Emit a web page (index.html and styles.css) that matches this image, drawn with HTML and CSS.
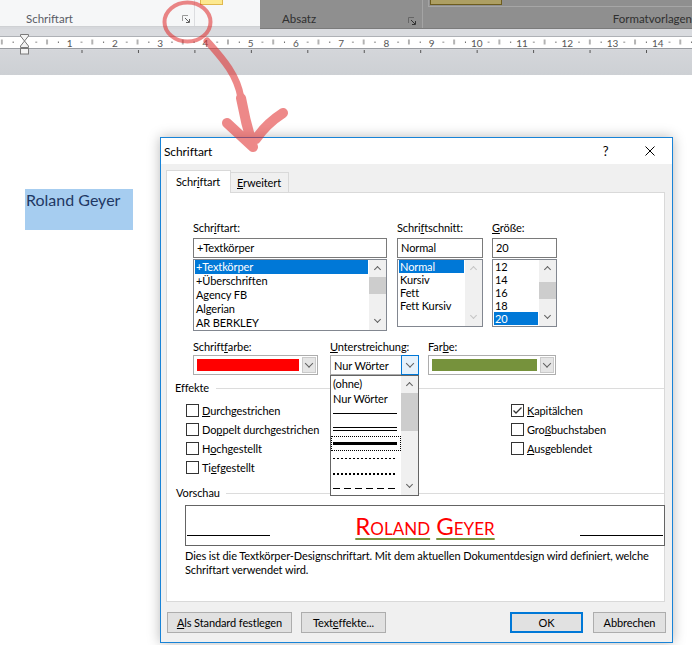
FILE: index.html
```html
<!DOCTYPE html>
<html lang="de">
<head>
<meta charset="utf-8">
<title>Schriftart</title>
<link rel="stylesheet" href="styles.css">
</head>
<body>
<div class="ribbon">
  <div class="rb-left">
    <div class="grp-font">
      <span class="grp-lbl">Schriftart</span>
      <svg class="launch" width="8" height="8" viewBox="0 0 8 8"><path d="M0.5 6V0.5H6" fill="none" stroke="#9a9a9a"/><path d="M3 3L7 7M7.5 4V7.5H4" fill="none" stroke="#606060"/></svg>
    </div>
    <div class="grp-par"><span class="hl-btn"></span></div>
  </div>
  <div class="rb-right">
    <div class="grp-abs">
      <span class="grp-lbl dark">Absatz</span>
      <svg class="launch" width="8" height="8" viewBox="0 0 8 8"><path d="M0.5 6V0.5H6" fill="none" stroke="#666"/><path d="M3 3L7 7M7.5 4V7.5H4" fill="none" stroke="#333"/></svg>
    </div>
    <div class="grp-styles">
      <div class="gallery"><span class="gal-sel"></span></div>
      <span class="grp-lbl dark">Formatvorlagen</span>
    </div>
  </div>
</div>
<div class="ruler-area">
  <svg width="692" height="46" viewBox="0 0 692 46">
    <defs>
      <pattern id="tk" x="24.47" y="0" width="45.23" height="46" patternUnits="userSpaceOnUse">
        <rect x="11.3" y="12.5" width="1" height="1.5" fill="#666"/>
        <rect x="22.1" y="10.5" width="1" height="5" fill="#666"/>
        <rect x="33.4" y="12.5" width="1" height="1.5" fill="#666"/>
      </pattern>
      <pattern id="tb" x="81.5" y="0" width="56.45" height="46" patternUnits="userSpaceOnUse">
        <rect x="0" y="21" width="1" height="3" fill="#555"/>
      </pattern>
    </defs>
    <rect x="0" y="7" width="692" height="12" fill="#fff"/>
    <rect x="0" y="7" width="692" height="1" fill="#aeb1b6"/>
    <rect x="0" y="19" width="692" height="1" fill="#9a9da2"/>
    <rect x="0" y="8" width="692" height="11" fill="url(#tk)"/>
    <rect x="0" y="20" width="692" height="6" fill="url(#tb)"/>
    <g class="rnum" text-anchor="middle">
      <text x="69.7" y="17.5">1</text><text x="114.9" y="17.5">2</text><text x="160.2" y="17.5">3</text><text x="205.4" y="17.5">4</text><text x="250.6" y="17.5">5</text><text x="295.9" y="17.5">6</text><text x="341.1" y="17.5">7</text><text x="386.3" y="17.5">8</text><text x="431.5" y="17.5">9</text><text x="476.8" y="17.5">10</text><text x="522" y="17.5">11</text><text x="567.2" y="17.5">12</text><text x="612.5" y="17.5">13</text><text x="657.7" y="17.5">14</text>
    </g>
    <g fill="#f3f3f3" stroke="#7b7b7b" stroke-width="1">
      <path d="M20.5 5.5H28.5V7L24.5 12L20.5 7Z"/>
      <path d="M24.5 12L28.5 17V18.5H20.5V17Z"/>
      <rect x="20.5" y="19.5" width="8" height="5.5"/>
    </g>
  </svg>
</div>
<div class="doc">
  <div class="sel-text">Roland Geyer</div>
</div>

<div class="dialog">
  <div class="titlebar">
    <span class="title">Schriftart</span>
    <span class="help">?</span>
    <svg class="close" width="10" height="10" viewBox="0 0 10 10"><path d="M0.5 0.5L9.5 9.5M9.5 0.5L0.5 9.5" stroke="#000" stroke-width="1"/></svg>
  </div>
  <div class="dbody">
    <div class="tabs">
      <div class="tab active">Schr<u>i</u>ftart</div>
      <div class="tab"><u>E</u>rweitert</div>
    </div>
    <div class="panel">
      <div class="row1">
        <div class="fld f-font">
          <div class="lbl">Schr<u>i</u>ftart:</div>
          <div class="inp">+Textkörper</div>
          <div class="list l-font">
            <div class="items">
              <div class="it sel">+Textkörper</div>
              <div class="it">+Überschriften</div>
              <div class="it">Agency FB</div>
              <div class="it">Algerian</div>
              <div class="it">AR BERKLEY</div>
            </div>
            <div class="sb"><div class="arr up"></div><div class="trk"><div class="thumb"></div></div><div class="arr dn"></div></div>
          </div>
        </div>
        <div class="fld f-style">
          <div class="lbl">Schri<u>f</u>tschnitt:</div>
          <div class="inp">Normal</div>
          <div class="list l-sm">
            <div class="items">
              <div class="it sel">Normal</div>
              <div class="it">Kursiv</div>
              <div class="it">Fett</div>
              <div class="it">Fett Kursiv</div>
            </div>
            <div class="sb"><div class="arr up off"></div><div class="trk"></div><div class="arr dn off"></div></div>
          </div>
        </div>
        <div class="fld f-size">
          <div class="lbl"><u>G</u>röße:</div>
          <div class="inp">20</div>
          <div class="list l-sm">
            <div class="items">
              <div class="it">12</div>
              <div class="it">14</div>
              <div class="it">16</div>
              <div class="it">18</div>
              <div class="it sel">20</div>
            </div>
            <div class="sb"><div class="arr up"></div><div class="trk"><div class="thumb t-size"></div></div><div class="arr dn"></div></div>
          </div>
        </div>
      </div>
      <div class="row2">
        <div class="fld f-color">
          <div class="lbl2">Schrift<u>f</u>arbe:</div>
          <div class="combo"><span class="sw sw-red"></span><span class="dbtn"></span></div>
        </div>
        <div class="fld f-ul">
          <div class="lbl2"><u>U</u>nterstreichung:</div>
          <div class="combo combo-ul"><span class="ctext">Nur Wörter</span><span class="dbtn focus"></span></div>
        </div>
        <div class="fld f-ucol">
          <div class="lbl2">Far<u>b</u>e:</div>
          <div class="combo"><span class="sw sw-green"></span><span class="dbtn"></span></div>
        </div>
      </div>
      <div class="sec-h">Effekte</div>
      <div class="fx">
        <div class="cb"><span class="box"></span><span><u>D</u>urchgestrichen</span></div>
        <div class="cb"><span class="box"></span><span>Do<u>p</u>pelt durchgestrichen</span></div>
        <div class="cb"><span class="box"></span><span>H<u>o</u>chgestellt</span></div>
        <div class="cb"><span class="box"></span><span>Ti<u>e</u>fgestellt</span></div>
        <div class="cb"><span class="box"><svg width="11" height="11" viewBox="0 0 11 11"><path d="M1.5 5.5L4 8L9.5 2.5" fill="none" stroke="#333" stroke-width="1.3"/></svg></span><span><u>K</u>apitälchen</span></div>
        <div class="cb"><span class="box"></span><span>Gro<u>ß</u>buchstaben</span></div>
        <div class="cb"><span class="box"></span><span><u>A</u>usgeblendet</span></div>
      </div>
      <div class="sec-h sec-pv">Vorschau</div>
      <div class="pv-box">
        <span class="pv-rule"></span>
        <span class="pv-text"><span class="w">Roland</span> <span class="w">Geyer</span></span>
        <span class="pv-rule"></span>
      </div>
      <p class="desc">Dies ist die Textkörper-Designschriftart. Mit dem aktuellen Dokumentdesign wird definiert, welche<br>Schriftart verwendet wird.</p>
    </div>
    <div class="btns">
      <div class="btn b-std"><span><u>A</u>ls Standard festlegen</span></div>
      <div class="btn b-fx"><span>Text<u>e</u>ffekte...</span></div>
      <div class="btn b-ok">OK</div>
      <div class="btn b-cancel">Abbrechen</div>
    </div>
  </div>
  <div class="ddl">
    <div class="dd-items">
      <div class="dd-it">(ohne)</div>
      <div class="dd-it">Nur Wörter</div>
      <div class="dd-it"><span class="ln ln-single"></span></div>
      <div class="dd-it"><span class="ln ln-double"></span></div>
      <div class="dd-it focus"><span class="ln ln-thick"></span></div>
      <div class="dd-it"><span class="ln ln-dot"></span></div>
      <div class="dd-it"><span class="ln ln-dotbold"></span></div>
      <div class="dd-it"><span class="ln ln-dash"></span></div>
    </div>
    <div class="sb"><div class="arr up"></div><div class="trk"><div class="thumb t-dd"></div></div><div class="arr dn"></div></div>
  </div>
</div>

<svg class="annot" width="692" height="645" viewBox="0 0 692 645">
  <g opacity="0.55" fill="none" stroke="#e02828" stroke-linecap="round" stroke-linejoin="round">
    <ellipse cx="187.5" cy="22" rx="23" ry="19.5" stroke-width="4"/>
    <path d="M207 41 C222 58 237 74 241 98" stroke-width="7"/>
    <path d="M241 98 C245 120 249 134 253 147 M227 123 L253 147 M283 113 Q266 124 256 139" stroke-width="10"/>
  </g>
</svg>
</body>
</html>
```
FILE: styles.css
```css
* { box-sizing: border-box; }

body {
  margin: 0;
  width: 692px;
  height: 645px;
  overflow: hidden;
  position: relative;
  background: #fff;
  font-family: Lato, "Liberation Sans", sans-serif;
  font-size: 11px;
  letter-spacing: -0.1px;
  color: #000;
}

/* ribbon */
.ribbon { display: flex; height: 29px; background: #d6d8dc; }
.rb-left { width: 260px; height: 27px; background: #f6f7f8; border-bottom: 1px solid #cfd1d4; display: flex; }
.grp-font {
  width: 195px; border-right: 1px solid #dcdde0;
  display: flex; align-items: flex-end; justify-content: space-between;
  padding: 0 4px 0 26px;
}
.grp-lbl { font-size: 11.5px; letter-spacing: 0; line-height: 14px; color: #5a5c66; white-space: nowrap; }
.grp-lbl.dark { color: #303030; }
.launch { display: block; margin-bottom: 3px; }
.grp-par { flex: 1; padding-left: 5px; }
.hl-btn { display: block; width: 23px; height: 5px; background: #fde98f; border: 1px solid #e0b84e; border-top: none; }
.rb-right { flex: 1; height: 29px; background: #8f8f8f; display: flex; border-bottom: 1px solid #7b7b7b; }
.grp-abs {
  width: 163px; border-right: 1px solid #a4a4a4;
  display: flex; align-items: flex-end; justify-content: space-between;
  padding: 0 6px 2px 22px;
}
.grp-abs .launch { margin-bottom: 1px; }
.grp-styles { flex: 1; display: flex; flex-direction: column; align-items: flex-end; padding-left: 5px; padding-bottom: 2px; }
.gallery { align-self: stretch; height: 7px; border-left: 1px solid #a3a3a3; border-bottom: 1px solid #a6a6a6; padding-left: 1px; }
.gal-sel { display: block; width: 72px; height: 5px; background: #ad9f63; border: 1px solid #6d5c1e; border-top: none; }
.grp-styles .grp-lbl { margin-top: auto; }

/* ruler */
.ruler-area { height: 46px; background: linear-gradient(#d9dbdf 0, #d9dbdf 20px, #d4d6da 21px, #cdd0d4 46px); }
.ruler-area svg { display: block; }
.rnum text { font-family: Lato, "Liberation Sans", sans-serif; font-size: 10px; fill: #555; }

/* document */
.doc { height: 570px; background: #fff; padding-top: 114px; padding-left: 25px; }
.sel-text {
  width: 108px; height: 41px; background: #a6cdf0; letter-spacing: 0;
  color: #1f3864; font-size: 16px; line-height: 20px; padding: 1px 0 0 1px;
}

/* dialog */
.dialog {
  position: absolute; left: 160px; top: 137px;
  width: 513px; height: 506px;
  border: 1px solid #1883d7; background: #f0f0f0;
  box-shadow: 0 0 12px rgba(0,0,0,0.28);
}
.titlebar { height: 26px; background: #fff; display: flex; align-items: center; padding-left: 3px; }
.title { font-size: 12px; letter-spacing: -0.1px; }
.help { margin-left: auto; width: 11px; text-align: center; font-size: 13px; }
.close { display: block; margin-left: 34px; margin-right: 17px; }
.dbody { padding: 6px 6px 0 5px; }
.tabs { display: flex; height: 22px; align-items: flex-end; }
.tab {
  height: 20px; width: 58px; border: 1px solid #d9d9d9; border-bottom: none; border-left: none;
  background: #f0f0f0; line-height: 19px; padding-left: 6px; white-space: nowrap;
}
.tab.active {
  height: 23px; width: 65px; border-left: 1px solid #d9d9d9; background: #fff;
  position: relative; z-index: 1; margin-bottom: -1px; line-height: 22px; padding-left: 9px;
}
.panel { width: 499px; height: 410px; border: 1px solid #d9d9d9; background: #fff; padding-top: 28px; }

.row1 { display: flex; margin-left: 26px; }
.f-font { width: 194px; }
.f-style { width: 86px; margin-left: 10px; }
.f-size { width: 65px; margin-left: 9px; }
.lbl { height: 14px; line-height: 14px; margin-bottom: 3px; white-space: nowrap; }
.inp { height: 20px; border: 1px solid #7a7a7a; background: #fff; padding-left: 3px; line-height: 18px; white-space: nowrap; }
.list { margin-top: 1px; border: 1px solid #828790; background: #fff; display: flex; }
.l-font { height: 72px; }
.l-sm { height: 68px; }
.items { flex: 1; padding: 0 1px; overflow: hidden; }
.it { height: 14px; line-height: 14px; padding-left: 1px; white-space: nowrap; }
.l-sm .it { height: 13px; line-height: 13px; }
.it.sel { background: #0078d7; color: #fff; }

.sb { width: 17px; background: #f0f0f0; display: flex; flex-direction: column; flex: none; }
.arr { height: 17px; position: relative; flex: none; }
.arr::before {
  content: ""; position: absolute; left: 6px; top: 7px; width: 4px; height: 4px;
  border-left: 1.5px solid #606060; border-top: 1.5px solid #606060; transform: rotate(45deg);
}
.arr.dn::before { transform: rotate(225deg); top: 4px; }
.arr.off::before { border-color: #c4c4c4; }
.trk { flex: 1; }
.thumb { width: 17px; height: 17px; background: #cdcdcd; }
.t-size { margin-top: 5px; }
.t-dd { height: 38px; }

.row2 { display: flex; margin: 9px 0 0 26px; }
.f-color { width: 125px; }
.f-ul { width: 89px; margin-left: 12px; }
.f-ucol { width: 128px; margin-left: 9px; }
.lbl2 { height: 14px; line-height: 14px; margin-bottom: 1px; white-space: nowrap; }
.combo { height: 20px; border: 1px solid #adadad; background: #fff; display: flex; align-items: center; padding: 0 1px 0 0; }
.sw { flex: 1; height: 12px; margin: 0 3px 0 3px; }
.sw-red { background: #ff0000; }
.sw-green { background: #76923c; }
.dbtn { width: 14px; height: 16px; background: #e5e5e5; border: 1px solid #cacaca; position: relative; flex: none; }
.dbtn::before {
  content: ""; position: absolute; left: 50%; top: 50%; width: 5px; height: 5px;
  border-right: 1px solid #606060; border-bottom: 1px solid #606060;
  transform: translate(-50%, -75%) rotate(45deg);
}
.combo-ul { padding: 0; }
.ctext { flex: 1; padding-left: 3px; white-space: nowrap; }
.dbtn.focus { width: 18px; height: 20px; margin: -1px -1px -1px 0; border: 1px solid #0078d7; background: #e5f1fb; }

.sec-h { display: flex; align-items: center; margin: 6px 0 0 8px; line-height: 14px; height: 14px; }
.sec-h::after { content: ""; flex: 1; border-top: 1px solid #dcdcdc; margin-left: 7px; }
.sec-pv { margin-top: 9px; margin-left: 9px; }
.sec-pv::after { margin-left: 6px; }

.fx {
  display: grid; grid-template-columns: 325px auto; grid-template-rows: repeat(4, 19px);
  grid-auto-flow: column; margin: 6px 0 0 19px;
}
.cb { display: flex; align-items: center; white-space: nowrap; }
.box {
  width: 13px; height: 13px; border: 1px solid #333; background: #fff; margin-right: 3px; flex: none;
  display: flex; align-items: center; justify-content: center;
}
.box svg { display: block; }

.pv-box {
  margin: 5px 0 0 18px; width: 480px; height: 41px; border: 1px solid #646464;
  display: flex; align-items: flex-end; background: #fff;
}
.pv-rule { width: 83px; height: 1px; background: #000; margin: 0 1px 9px; flex: none; }
.pv-text {
  flex: 1; text-align: center; font-size: 24px; letter-spacing: 0; font-variant: small-caps; color: #ff0000;
  line-height: 30px; margin-bottom: 4px; white-space: nowrap;
}
.pv-text .w { text-decoration: underline 2px #76923c; text-underline-offset: 3px; }
.desc { margin: 3px 0 0 18px; line-height: 13.5px; white-space: nowrap; }

.btns { display: flex; margin-top: 10px; padding-left: 1px; }
.btn {
  height: 21px; border: 1px solid #adadad; background: #e1e1e1;
  display: flex; align-items: center; justify-content: center; white-space: nowrap;
}
.b-std { width: 125px; }
.b-fx { width: 85px; margin-left: 9px; }
.b-ok { width: 73px; margin-left: auto; border: 2px solid #0078d7; }
.b-cancel { width: 73px; margin-left: 10px; }

/* underline dropdown */
.ddl {
  position: absolute; left: 169px; top: 237px; width: 89px; height: 121px;
  border: 1px solid #646464; background: #fff; display: flex; z-index: 2;
}
.dd-items { flex: 1; }
.dd-it { height: 15px; display: flex; align-items: center; padding-left: 2px; white-space: nowrap; }
.dd-it.focus { border: 1px dotted #000; padding-left: 1px; }
.ln { display: block; width: 64px; }
.ln-single { height: 1px; background: #000; }
.ln-double { height: 4px; border-top: 1px solid #000; border-bottom: 1px solid #000; }
.ln-thick { height: 3px; background: #000; }
.ln-dot { height: 1px; background: repeating-linear-gradient(90deg, #000 0 2px, transparent 2px 4px); }
.ln-dotbold { height: 2px; background: repeating-linear-gradient(90deg, #000 0 2px, transparent 2px 4px); }
.ln-dash { height: 1px; background: repeating-linear-gradient(90deg, #000 0 7px, transparent 7px 11px); }

/* annotation */
.annot { position: absolute; left: 0; top: 0; z-index: 5; pointer-events: none; }
```
